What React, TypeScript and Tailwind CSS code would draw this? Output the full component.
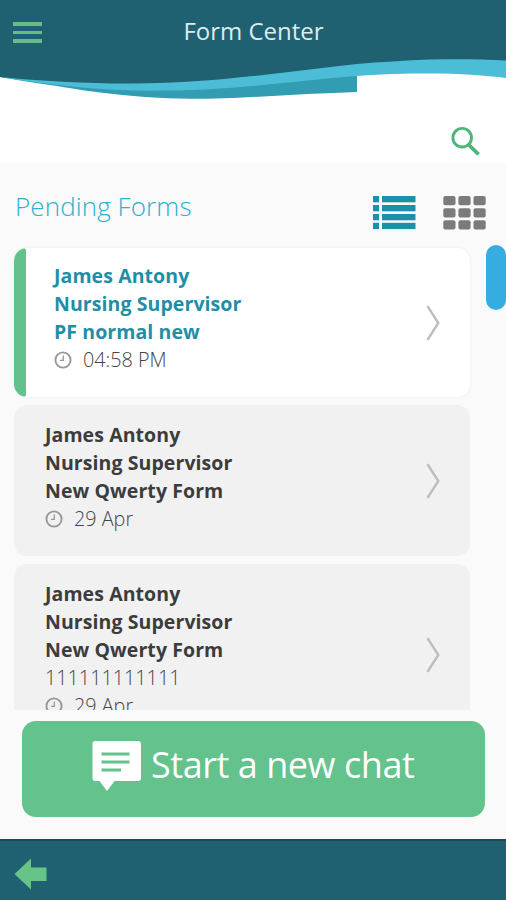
import { useState } from 'react';

interface PendingForm {
  id: number;
  name: string;
  role: string;
  title: string;
  note?: string;
  time: string;
  unread?: boolean;
}

const forms: PendingForm[] = [
  { id: 1, name: 'James Antony', role: 'Nursing Supervisor', title: 'PF normal new', time: '04:58 PM', unread: true },
  { id: 2, name: 'James Antony', role: 'Nursing Supervisor', title: 'New Qwerty Form', time: '29 Apr' },
  { id: 3, name: 'James Antony', role: 'Nursing Supervisor', title: 'New Qwerty Form', note: '111111111111', time: '29 Apr' },
];

function ClockIcon() {
  return (
    <svg viewBox="0 0 18 18" className="w-[18px] h-[18px] shrink-0" fill="none" stroke="#979797">
      <circle cx="9" cy="9" r="7.6" strokeWidth="1.9" />
      <path d="M9.3 4.6V9.3H6" strokeWidth="1.3" />
    </svg>
  );
}

function ChevronIcon() {
  return (
    <svg viewBox="0 0 14 36" className="w-3.5 h-9 shrink-0" fill="none" stroke="#bdbdbd" strokeWidth="2.4">
      <path d="M1.5 1.2L12.3 18L1.5 34.8" />
    </svg>
  );
}

function Header() {
  return (
    <header className="relative h-[163px] bg-white">
      {/* Wave background */}
      <svg viewBox="0 0 506 104" className="absolute top-0 left-0 w-full h-[104px]">
        <path d="M0 77C16 80 30 82 50 85C70 88 85 91 100 92.500C130 96 160 98.800 190 98.800C215 98.800 235 98 253 97C290 95 325 93 357 92V70H0Z" fill="#329cb3" />
        <path d="M0 77C50 85 100 90.700 150 90.700C190 90.700 220 89 253 86C290 82.500 325 78.500 357 76C385 74 405 73.500 430 73.500C460 73.500 485 75.500 506 78V50H0Z" fill="#4bbdd6" />
        <path d="M0 0H506V60.500C480 59 455 59 430 59.500C405 60.500 380 62 357 64C320 68 290 72 253 76C220 79.500 180 83.500 130 83.500C85 83.500 40 81 0 77Z" fill="#1f6171" />
      </svg>
      <div className="relative flex items-center h-[64px] px-[13px]">
        <button className="flex flex-col gap-[5px] w-[29px] pt-px">
          <span className="h-[3.500px] bg-[#67bd87]" />
          <span className="h-[3.500px] bg-[#67bd87]" />
          <span className="h-[3.500px] bg-[#67bd87]" />
        </button>
        <h1 className="flex-1 pr-[28px] pb-[2px] text-center text-[24px] leading-8 text-[#dcecf0]">Form Center</h1>
      </div>
      <div className="flex justify-end pt-[62px] pr-[25px]">
        <svg viewBox="0 0 30 30" className="w-[30px] h-[30px]" fill="none" stroke="#50b579">
          <circle cx="11.200" cy="11.700" r="9.300" strokeWidth="2.900" />
          <path d="M18 19L27.600 28.400" strokeWidth="3.800" />
        </svg>
      </div>
    </header>
  );
}

function ViewToggle({ view, onChange }: { view: string; onChange: (view: string) => void }) {
  return (
    <div className="flex items-start gap-[27px] pt-[32px]">
      <button onClick={() => onChange('list')} className={view === 'list' ? 'text-[#1a91a8]' : 'text-[#7b7b7b]'}>
        <svg viewBox="0 0 44 35" className="w-[44px] h-[35px]" fill="currentColor">
          {[1, 10, 19, 27.8].map((y) => (
            <g key={y}>
              <rect x="1" y={y} width="6" height="6.300" />
              <rect x="10" y={y} width="33.500" height="6.300" />
            </g>
          ))}
        </svg>
      </button>
      <button onClick={() => onChange('grid')} className={view === 'grid' ? 'text-[#1a91a8]' : 'text-[#7b7b7b]'}>
        <svg viewBox="0 0 43 35" className="w-[43px] h-[35px]" fill="currentColor">
          {[1, 13.2, 25.3].map((y) =>
            [0.3, 15.4, 30.5].map((x) => (
              <rect key={`${x}-${y}`} x={x} y={y} width="12.200" height="9.300" rx="2" />
            ))
          )}
        </svg>
      </button>
    </div>
  );
}

function FormCard({ form }: { form: PendingForm }) {
  return (
    <div
      className={`flex shrink-0 items-stretch w-[456px] rounded-[13px] overflow-hidden ${
        form.unread ? 'bg-white h-[149px] shadow-[0_0_2px_1px_#f3f3f3]' : 'bg-[#f1f1f1]'
      } ${form.note ? 'h-[182px]' : !form.unread ? 'h-[151px]' : ''}`}
    >
      {form.unread && <div className="w-[12px] shrink-0 rounded-tr-[3px] rounded-br-[3px] bg-[#62c18c]" />}
      <div
        className={`flex-1 leading-[28.200px] ${
          form.unread ? 'pl-[28px] pt-[14px] text-[#1f8ea6]' : 'pl-[31px] pt-[16px] text-[#3c3c3c]'
        }`}
      >
        <div className="text-[19.500px] font-bold tracking-[0.080px]">
          <p>{form.name}</p>
          <p>{form.role}</p>
          <p>{form.title}</p>
        </div>
        <div className="-mt-px text-[19.800px] font-light text-[#454545]">
          {form.note && <p>{form.note}</p>}
          <p className="flex items-center gap-[11px]">
            <ClockIcon />
            {form.time}
          </p>
        </div>
      </div>
      <div className="flex items-center pr-[30px]">
        <ChevronIcon />
      </div>
    </div>
  );
}

export default function App() {
  const [view, setView] = useState('list');

  return (
    <div className="flex flex-col w-[506px] h-[900px] overflow-hidden bg-[#fafafa] font-['Open_Sans',sans-serif]">
      <Header />

      <div className="flex justify-between h-[82px] pl-[15px] pr-[20px]">
        <h2 className="pt-[25px] text-[26px] leading-9 font-light tracking-[0.1px] text-[#2eb0cd]">Pending Forms</h2>
        <ViewToggle view={view} onChange={setView} />
      </div>

      {/* Forms list */}
      <div className="flex justify-between h-[465px] pl-[14px] overflow-hidden">
        <div className="flex flex-col gap-[8px] pt-[3px] px-[2px] -mx-[2px]">
          {forms.map((form) => (
            <FormCard key={form.id} form={form} />
          ))}
        </div>
        <div className="w-[20px] h-[65px] rounded-[10px] bg-[#35ade0]" />
      </div>

      <div className="pt-[11px] pl-[22px] pr-[21px]">
        <button className="flex w-full h-[96px] items-start rounded-[14px] bg-[#64c28d] pl-[70px] text-white">
          <svg viewBox="0 0 50 52" className="mt-[19px] w-[50px] h-[52px]">
            <path d="M3 1H46Q49 1 49 4V38Q49 41 46 41H22.500L15 51L7.500 41H3Q0.500 41 0.500 38V4Q0.500 1 3 1Z" fill="white" />
            <path d="M9.500 14H37.500M9.500 22H37.500M9.500 30H29" stroke="#64c28d" strokeWidth="2.800" />
          </svg>
          <span className="mt-[19px] ml-[9px] text-[36px] leading-[49px] tracking-[-0.450px] whitespace-nowrap">Start a new chat</span>
        </button>
      </div>

      <footer className="mt-auto flex h-[61px] items-center border-t-2 border-[#124d5d] bg-[#1f6171] pt-[7px] pl-[14px]">
        <button>
          <svg viewBox="0 0 33 32" className="w-[33px] h-[32px]" fill="#67c488">
            <path d="M0.500 16L17 0.500V9.500H32.500V23H17V31.500Z" />
          </svg>
        </button>
      </footer>
    </div>
  );
}
